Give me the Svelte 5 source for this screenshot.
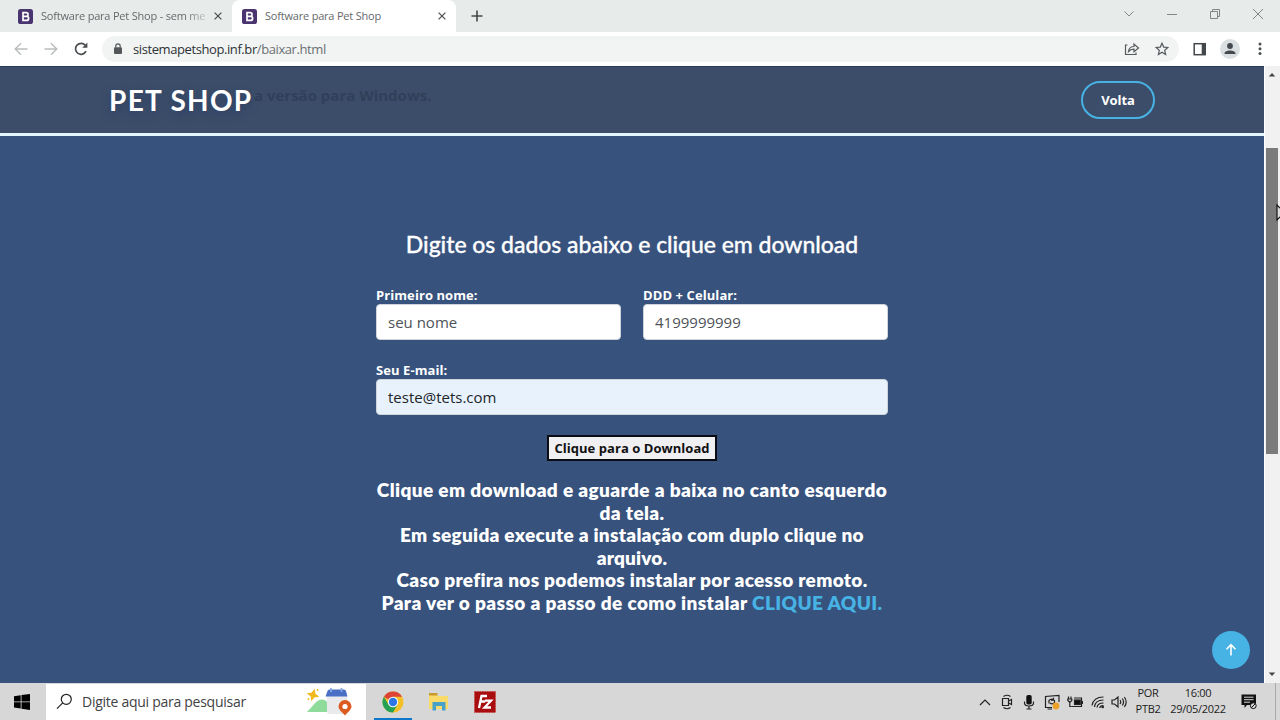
<script lang="ts">
  let nome: string = '';
  let celular: string = '';
  let email: string = 'teste@tets.com';

  const tabs = [
    { title: 'Software para Pet Shop - sem me', active: false },
    { title: 'Software para Pet Shop', active: true }
  ];

  // ajuste fino do espaçamento de cada linha
  const lines = [
    { text: 'Clique em download e aguarde a baixa no canto esquerdo', spacing: 0.38 },
    { text: 'da tela.', spacing: 0.4 },
    { text: 'Em seguida execute a instalação com duplo clique no', spacing: 0.28 },
    { text: 'arquivo.', spacing: 0.15 },
    { text: 'Caso prefira nos podemos instalar por acesso remoto.', spacing: 0.31 },
    { text: 'Para ver o passo a passo de como instalar', spacing: 0.38, link: 'CLIQUE AQUI.' }
  ];
</script>

<div class="screen">
  <div class="tabstrip">
    {#each tabs as tab}
      <div class="tab" class:active={tab.active}>
        <svg class="favicon" viewBox="0 0 15 15">
          <rect width="15" height="15" rx="2.6" fill="#4a3470" />
          <path d="M5 3.7h3.2a1.8 1.8 0 0 1 0 3.7H5zM5 7.4h3.6a2 2 0 0 1 0 4H5z" fill="none" stroke="#fff" stroke-width="1.7" />
        </svg>
        <span class="tab-title" class:faded={!tab.active}>{tab.title}</span>
        <svg class="tab-close" viewBox="0 0 8 8"><path d="M.6.6l6.8 6.8M7.4.6L.6 7.4" /></svg>
      </div>
    {/each}
    <svg class="new-tab" viewBox="0 0 12 12"><path d="M6 .5v11M.5 6h11" /></svg>
    <div class="window-controls">
      <svg width="12" height="12" viewBox="0 0 12 12"><path d="M1.5 3.5L6 8l4.500-4.500" /></svg>
      <svg width="12" height="12" viewBox="0 0 12 12"><path d="M1 6.500h10" /></svg>
      <svg width="12" height="12" viewBox="0 0 12 12"><path d="M1.500 3.500h7v7h-7zM3.500 3.500v-2h7v7h-2" /></svg>
      <svg width="12" height="12" viewBox="0 0 12 12"><path d="M1 1l10 10M11 1L1 11" /></svg>
    </div>
  </div>

  <div class="toolbar">
    <div class="nav-icons">
      <svg width="14" height="14" viewBox="0 0 14 14" class="muted"><path d="M13.500 7H1.500M7 1.200L1.200 7 7 12.800" /></svg>
      <svg width="14" height="14" viewBox="0 0 14 14" class="muted"><path d="M.5 7h12M7 1.200L12.800 7 7 12.800" /></svg>
      <svg width="14" height="14" viewBox="0 0 14 14"><path d="M12 9.200A5.500 5.500 0 1 1 11.300 3.300" /><path d="M13.400.6v5.200H8.200z" fill="#4b4f52" stroke="none" /></svg>
    </div>
    <div class="omnibox">
      <svg width="10" height="12" viewBox="0 0 10 12">
        <rect x="1" y="4.300" width="8" height="6.700" rx="1" fill="#54585b" />
        <path d="M2.800 4.500V3a2.200 2.200 0 0 1 4.400 0v1.500" fill="none" stroke="#54585b" stroke-width="1.200" />
      </svg>
      <span class="url">sistemapetshop.inf.br<span class="path">/baixar.html</span></span>
      <svg class="share" width="16" height="14" viewBox="0 0 16 14"><path d="M3.500 3H1.500v9.500h10.500V10.500M4.500 9.500c.5-3.500 2.500-5 5.500-5V2l4.500 4L10 9.700V7.200c-2.500 0-4 .5-5.500 2.300z" /></svg>
      <svg class="star" width="14" height="14" viewBox="0 0 14 14"><path d="M7 1.200l1.700 3.900 4.200.4-3.200 2.800.9 4.100L7 10.200l-3.600 2.200.9-4.100L1.100 5.500l4.200-.4z" /></svg>
    </div>
    <svg class="panel" width="14" height="14" viewBox="0 0 14 14"><rect x="1.200" y="1.700" width="11" height="11" fill="none" stroke="#45484b" stroke-width="1.500" /><path d="M8.700 1.500H13v11.500H8.700z" fill="#45484b" /></svg>
    <svg class="profile" width="20" height="20" viewBox="0 0 20 20"><circle cx="10" cy="10" r="10" fill="#dadfe2" /><circle cx="10" cy="7" r="2.900" fill="#43494f" /><path d="M4.500 14.500c0-4 11-4 11 0v.5h-11z" fill="#43494f" /></svg>
    <svg class="dots" width="4" height="14" viewBox="0 0 4 14"><circle cx="2" cy="2" r="1.500" /><circle cx="2" cy="6.800" r="1.500" /><circle cx="2" cy="11.600" r="1.500" /></svg>
  </div>

  <div class="viewport">
    <div class="page">
      <header>
        <span class="behind">a versão para Windows.</span>
        <h1>PET SHOP</h1>
        <a class="volta" href="#volta">Volta</a>
      </header>

      <main>
        <h3>Digite os dados abaixo e clique em download</h3>
        <form on:submit|preventDefault>
          <div class="row">
            <div class="field">
              <label for="nome">Primeiro nome:</label>
              <input id="nome" type="text" placeholder="seu nome" bind:value={nome} />
            </div>
            <div class="field">
              <label for="celular">DDD + Celular:</label>
              <input id="celular" type="text" placeholder="4199999999" bind:value={celular} />
            </div>
          </div>
          <div class="field">
            <label for="email">Seu E-mail:</label>
            <input id="email" class="autofill" type="text" bind:value={email} />
          </div>
          <button type="submit">Clique para o Download</button>
        </form>
        <div class="info">
          {#each lines as line}
            <div><span style="letter-spacing: {line.spacing}px">{line.text}{#if line.link}&nbsp;<a href="#passo">{line.link}</a>{/if}</span></div>
          {/each}
        </div>
      </main>

      <a class="back-to-top" href="#top" aria-label="Topo">
        <svg width="14" height="14" viewBox="0 0 14 14"><path d="M7 12.500V2M2.500 6.200L7 1.700l4.500 4.500" /></svg>
      </a>
    </div>

    <div class="scrollbar">
      <svg width="8" height="5" viewBox="0 0 8 5"><path d="M.8 4.500L4 1l3.200 3.500z" /></svg>
      <div class="thumb"></div>
      <svg width="8" height="5" viewBox="0 0 8 5"><path d="M.8.500L4 4 7.200.500z" /></svg>
    </div>
    <svg class="cursor" width="4" height="18" viewBox="0 0 4 18"><path d="M1 1v15l4-4V5z" /></svg>
  </div>

  <div class="taskbar">
    <div class="start">
      <svg width="16" height="16" viewBox="0 0 16 16"><path d="M0 2.200L6.700 1.200v6.300H0zM7.500 1.100L16 0v7.500H7.500zM0 8.300h6.700v6.300L0 13.600zM7.500 8.300H16V16l-8.500-1.200z" /></svg>
    </div>
    <div class="search">
      <svg width="17" height="17" viewBox="0 0 17 17"><circle cx="10.300" cy="6.300" r="5" /><path d="M6.700 9.900L1 15.700" /></svg>
      <span>Digite aqui para pesquisar</span>
      <svg class="highlight" width="46" height="29" viewBox="0 0 46 29">
        <path d="M6 3l1.500 3.500L11 8l-3.500 1.500L6 13 4.500 9.500 1 8l3.500-1.500z" fill="#f2b91e" stroke="#f2b91e" transform="rotate(15 6 8)" />
        <circle cx="10.500" cy="3" r="1" fill="#f2b91e" /><circle cx="1.500" cy="12" r="1" fill="#f2b91e" />
        <path d="M0 24.500C6 20 9 12.500 15 12.500c4 0 5 3 7 4v8.500H2z" fill="#8edb9b" />
        <path d="M20 8h20v15q0 4-4 4H23q-3 0-3-3z" fill="#e9eaec" />
        <path d="M18.500 9.500L20.500 4q.500-1.500 2-1.500H37q1.500 0 2 1.500l1.500 5.500z" fill="#4970c4" />
        <path d="M24 1v4M34.500 1v4" stroke="#86a9e4" stroke-width="1.800" />
        <path d="M38 28.500c-3.500-4-6.500-6-6.500-9a6.500 6.500 0 0 1 13 0c0 3-3 5-6.500 9z" fill="#dc5b20" />
        <circle cx="38" cy="19.500" r="2.600" fill="#fff" />
      </svg>
    </div>
    <div class="app running">
      <svg width="22" height="22" viewBox="0 0 22 22">
        <circle cx="11" cy="11" r="10.500" fill="#f4c025" />
        <path d="M11 11L1.900 5.750A10.500 10.500 0 0 1 20.100 5.750H11z" fill="#dc4437" />
        <path d="M1.900 5.750A10.500 10.500 0 0 0 11 21.500l4.500-7.900L11 11 6.400 13.600z" fill="#26a052" />
        <circle cx="11" cy="11" r="5.200" fill="#fff" /><circle cx="11" cy="11" r="4.200" fill="#2d76e5" />
      </svg>
    </div>
    <div class="app">
      <svg width="20" height="18" viewBox="0 0 20 18">
        <path d="M0 1h7.500l1.500 2h10v13H0z" fill="#fadb6a" /><path d="M0 0h8.500v2.500H0z" fill="#c79a2b" />
        <path d="M3.500 9h13v8.500h-3.500v-4.500H7v4.500H3.500z" fill="#47a1c8" />
      </svg>
    </div>
    <div class="app">
      <svg width="22" height="22" viewBox="0 0 22 22">
        <rect x=".5" y=".5" width="21" height="21" fill="#a80d10" stroke="#c64b45" stroke-dasharray="1.500 1" />
        <path d="M5 17L7.500 5H13M6.200 10.500h5M11 9.700h6L10.500 16.500H17" fill="none" stroke="#fff" stroke-width="2.300" />
      </svg>
    </div>
    <div class="tray">
      <svg width="12" height="8" viewBox="0 0 12 8"><path d="M1 7l5-5 5 5" /></svg>
      <svg width="12" height="16" viewBox="0 0 12 16"><path d="M2.500 2.500q3.500-2.500 7 0M2.500 13.500q3.500 2.500 7 0M1.500 4.500h6v7h-6zM7.500 7l3-1.500v5L7.500 9" /></svg>
      <svg width="12" height="16" viewBox="0 0 12 16"><rect x="3.300" y="1" width="5.400" height="9.500" rx="1.800" fill="#111" stroke="none" /><path d="M1.500 7.500v1.500q0 3 4.500 3t4.500-3V7.500M6 12v3M3.500 15h5" /></svg>
      <svg width="16" height="16" viewBox="0 0 16 16"><path d="M8 13.500H1.500V2.500L15 1.500V8M3.500 15H8M5 9.500V6.500q2.500-2.500 4.500-.5M9.500 3.800v2.400H7M10.500 6v2.500q-2 2.500-4.500.5" /><circle cx="12" cy="12" r="3.400" fill="#eba028" stroke="none" /></svg>
      <svg width="16" height="14" viewBox="0 0 16 14"><rect x="7.500" y="5" width="5.700" height="4.500" fill="#111" /><path d="M5 11.500h9.500V3H7M15.500 6v3M1.500 1.500v2.500M4 1.500v2.500M.8 4h4v1.500L2.800 7.500.8 5.500zM2.800 7.500V11.500h2" /></svg>
      <svg width="14" height="14" viewBox="0 0 14 14"><path d="M1 10.500Q2.500 2 12.500 2M3.500 12Q4 5 12.500 5M6 12.500Q6.500 8 12.500 8M8.700 13Q9 11 12.500 10.700" /><circle cx="11.700" cy="12" r="1.300" fill="#222" stroke="none" /></svg>
      <svg width="16" height="14" viewBox="0 0 16 14"><path d="M1 5h2.500L7 2v10L3.500 9H1zM9 5q1.500 2 0 4M11.300 3.500q2.500 3.500 0 7M13.400 2q3.500 5 0 10" /></svg>
    </div>
    <div class="lang"><span>POR</span><span>PTB2</span></div>
    <div class="clock"><span>16:00</span><span>29/05/2022</span></div>
    <svg class="notes" width="16" height="16" viewBox="0 0 16 16"><path d="M.5.500h14.500v10.500H6L3.500 14v-3h-3z" fill="#111" /><path d="M3 3.200h9.500M3 5.700h9.500M3 8.200h6" stroke="#d6d6d6" /><circle cx="12.300" cy="11.700" r="2.900" fill="#d6d6d6" stroke="#111" /><path d="M10.500 13.500l3.500-3.500" stroke="#111" /></svg>
    <div class="show-desktop"></div>
  </div>
</div>

<style>
  :global(body) {
    margin: 0;
    overflow: hidden;
  }

  .screen {
    width: 1280px;
    height: 720px;
    display: flex;
    flex-direction: column;
    font-family: 'Open Sans', 'Noto Sans', sans-serif;
    overflow: hidden;
  }

  svg {
    flex: none;
    display: block;
  }

  /* navegador */
  .tabstrip {
    height: 32px;
    display: flex;
    align-items: center;
    background: #e7eceb;
  }

  .tab {
    box-sizing: border-box;
    width: 224px;
    height: 32px;
    display: flex;
    align-items: center;
    padding: 0 10px;
    color: #66696c;
  }

  .tab:first-child {
    margin-left: 8px;
  }

  .tab.active {
    background: #fff;
    border-radius: 8px 8px 0 0;
  }

  .favicon {
    width: 15px;
    height: 15px;
  }

  .tab-title {
    flex: 1;
    margin: -2px 4px 0 8px;
    font-size: 11px;
    letter-spacing: -0.2px;
    white-space: nowrap;
  }

  .faded {
    mask-image: linear-gradient(to right, #000 85%, transparent 102%);
  }

  .tab-close {
    width: 8px;
    height: 8px;
    stroke: #505356;
    stroke-width: 1.3;
  }

  .new-tab {
    width: 12px;
    height: 12px;
    margin-left: 15px;
    stroke: #45484a;
    stroke-width: 1.6;
  }

  .window-controls {
    display: flex;
    gap: 31px;
    margin: -5px 16px 0 auto;
    fill: none;
    stroke: #777a7b;
    stroke-width: 0.9;
  }

  .toolbar {
    box-sizing: border-box;
    height: 34px;
    display: flex;
    align-items: center;
    background: #fff;
    padding: 0 18px 0 14px;
  }

  .nav-icons {
    display: flex;
    gap: 16px;
    width: 88px;
    fill: none;
    stroke: #4b4f52;
    stroke-width: 1.7;
  }

  .nav-icons .muted {
    stroke: #b9bcbd;
    stroke-width: 1.4;
  }

  .omnibox {
    box-sizing: border-box;
    height: 26px;
    width: 1077px;
    border-radius: 13px;
    background: #f2f4f4;
    display: flex;
    align-items: center;
    padding: 0 10px 0 11px;
  }

  .url {
    margin-left: 10px;
    font-size: 13px;
    letter-spacing: -0.41px;
    color: #2e3235;
  }

  .path {
    color: #6c7073;
  }

  .share {
    margin-left: auto;
    margin-right: 15px;
  }

  .share,
  .star {
    fill: none;
    stroke: #55595c;
    stroke-width: 1.2;
  }

  .panel {
    margin-left: 14px;
  }

  .profile {
    margin-left: 13px;
  }

  .dots {
    margin-left: auto;
    fill: #4b4f52;
  }

  /* página */
  .viewport {
    position: relative;
    height: 617px;
    display: flex;
  }

  .page {
    position: relative;
    width: 1264px;
    background: #37527d;
    overflow: hidden;
  }

  header {
    position: relative;
    box-sizing: border-box;
    height: 70px;
    display: flex;
    align-items: center;
    justify-content: space-between;
    padding: 0 109px;
    background: #3c4d69;
    border-top: 1px solid #29395b;
    border-bottom: 3px solid #e3f5fd;
  }

  .behind {
    position: absolute;
    left: 254px;
    top: 17px;
    font-size: 15px;
    line-height: 22px;
    font-weight: 700;
    color: #30405a;
    white-space: nowrap;
  }

  h1 {
    position: relative;
    margin: 0;
    font-family: Lato, sans-serif;
    font-size: 28px;
    font-weight: 700;
    letter-spacing: 1.3px;
    color: #fff;
    text-shadow: 0 4px 9px #2c4066;
  }

  .volta {
    box-sizing: border-box;
    width: 74px;
    height: 38px;
    border: 2px solid #47b2e4;
    border-radius: 19px;
    color: #fff;
    font-size: 13px;
    line-height: 34px;
    font-weight: 700;
    letter-spacing: -0.1px;
    text-align: center;
    text-decoration: none;
  }

  main {
    width: 512px;
    margin: 0 auto;
    padding-top: 94px;
    display: flex;
    flex-direction: column;
    align-items: center;
    color: #fff;
  }

  h3 {
    margin: 0;
    font-family: Lato, sans-serif;
    font-size: 23px;
    line-height: 28px;
    font-weight: 500;
    letter-spacing: -0.04px;
    -webkit-text-stroke: 0.3px #fff;
    white-space: nowrap;
  }

  form {
    width: 100%;
    margin-top: 29px;
    display: flex;
    flex-direction: column;
    align-items: center;
  }

  .row {
    width: 100%;
    display: flex;
    gap: 22px;
    margin-bottom: 22px;
  }

  .field {
    width: 100%;
    display: flex;
    flex-direction: column;
  }

  label {
    font-size: 13px;
    line-height: 17px;
    font-weight: 700;
    letter-spacing: 0.08px;
  }

  input {
    box-sizing: border-box;
    width: 100%;
    height: 36px;
    border: 1px solid #ced4da;
    border-radius: 4px;
    padding: 0 11px;
    background: #fff;
    color: #212529;
    font-family: inherit;
    font-size: 15px;
    outline: none;
  }

  input::placeholder {
    color: #4d5257;
  }

  .autofill {
    background: #e8f2fd;
  }

  button {
    box-sizing: border-box;
    width: 170px;
    height: 26px;
    margin-top: 20px;
    padding: 0;
    border: 2px solid #0b0d14;
    background: #f0eff1;
    color: #111;
    font-family: inherit;
    font-size: 13px;
    font-weight: 700;
    letter-spacing: 0.05px;
    white-space: nowrap;
  }

  .info {
    margin-top: 18px;
    font-family: Lato, sans-serif;
    font-size: 19px;
    line-height: 22.5px;
    font-weight: 800;
    text-align: center;
    white-space: nowrap;
  }

  .info a {
    color: #47b2e4;
    text-decoration: none;
  }

  .back-to-top {
    position: absolute;
    right: 14px;
    bottom: 14px;
    width: 38px;
    height: 38px;
    border-radius: 50%;
    background: #47b2e4;
    display: flex;
    align-items: center;
    justify-content: center;
  }

  .back-to-top svg {
    fill: none;
    stroke: #fff;
    stroke-width: 1.6;
  }

  .scrollbar {
    box-sizing: border-box;
    width: 16px;
    background: #f1f1f1;
    display: flex;
    flex-direction: column;
    align-items: center;
    padding: 6px 1px 6px 0;
    border-left: 1px solid #fff;
    fill: #444;
  }

  .thumb {
    width: 12px;
    height: 306px;
    margin-top: 71px;
    margin-bottom: auto;
    background: #7b7b7b;
  }

  .cursor {
    position: absolute;
    right: 0;
    top: 138px;
    fill: #ddd;
    stroke: #111;
    stroke-width: 1.2;
  }

  /* barra de tarefas */
  .taskbar {
    height: 37px;
    display: flex;
    align-items: center;
    background: #d7d7d7;
  }

  .start {
    width: 32px;
    padding-left: 14px;
  }

  .search {
    box-sizing: border-box;
    width: 320px;
    height: 36px;
    display: flex;
    align-items: center;
    background: #fff;
    padding: 0 13px 0 10px;
    fill: none;
    stroke: #222;
    stroke-width: 1.2;
  }

  .search span {
    margin-left: 9px;
    font-size: 14px;
    letter-spacing: -0.27px;
    color: #3f4244;
    white-space: nowrap;
  }

  .highlight {
    margin-left: auto;
    stroke: none;
  }

  .app {
    box-sizing: border-box;
    width: 38px;
    height: 37px;
    display: flex;
    align-items: center;
    justify-content: center;
    margin-left: 8px;
    border-bottom: 2px solid transparent;
    border-top: 2px solid transparent;
  }

  .running {
    border-bottom-color: #0b78cc;
  }

  .tray {
    margin-left: auto;
    display: flex;
    align-items: center;
    gap: 8px;
    fill: none;
    stroke: #222;
    stroke-width: 1.2;
  }

  .tray svg:nth-child(-n + 2) {
    margin-right: 2px;
  }

  .tray svg:nth-child(3) {
    margin-right: 1px;
  }

  .tray svg:nth-child(4) {
    margin-right: -1px;
  }

  .tray svg:nth-child(6) {
    margin-right: -2px;
  }

  .lang,
  .clock {
    display: flex;
    flex-direction: column;
    align-items: center;
    font-size: 11px;
    line-height: 16px;
    letter-spacing: -0.3px;
    color: #1c1c1c;
    margin-top: -1px;
  }

  .lang {
    width: 26px;
    margin-left: 8px;
  }

  .clock {
    width: 56px;
    margin-left: 9px;
  }

  .notes {
    margin-left: 15px;
  }

  .show-desktop {
    height: 37px;
    width: 4px;
    margin-left: 18px;
    border-left: 1px solid #aaa;
  }
</style>
